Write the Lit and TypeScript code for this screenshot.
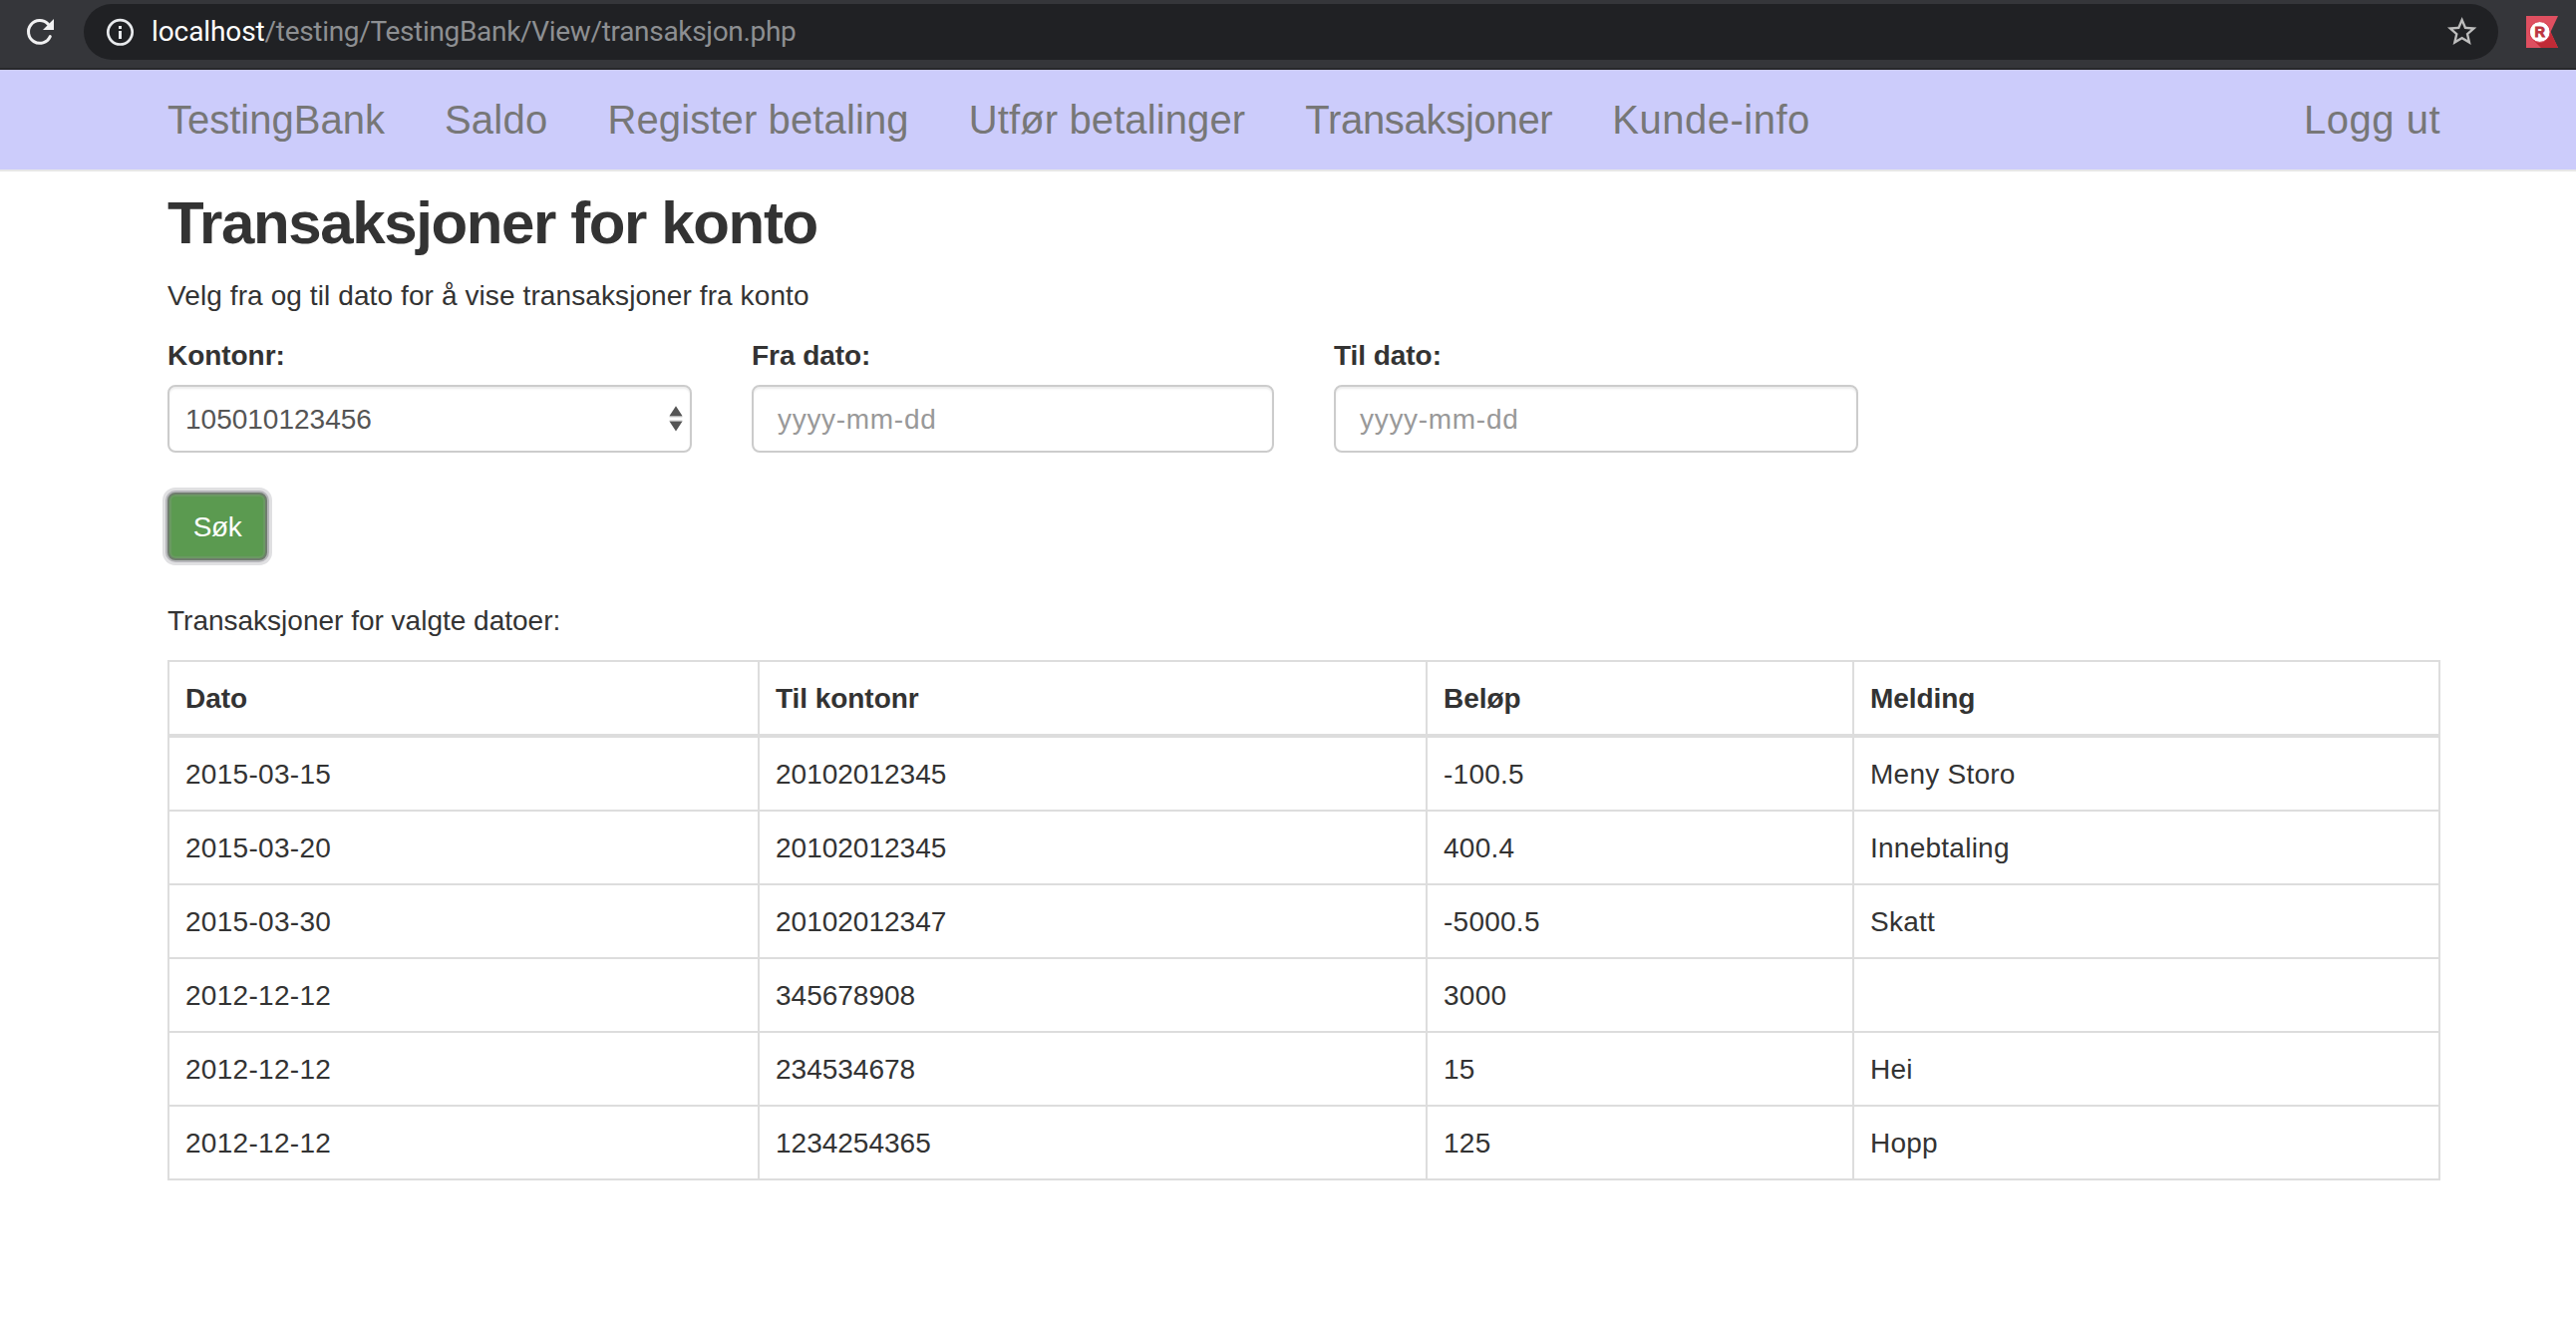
import { LitElement, html, css } from "lit";
import { customElement } from "lit/decorators.js";

interface Transaction {
  date: string;
  account: string;
  amount: string;
  message: string;
}

const TRANSACTIONS: Transaction[] = [
  { date: "2015-03-15", account: "20102012345", amount: "-100.5", message: "Meny Storo" },
  { date: "2015-03-20", account: "20102012345", amount: "400.4", message: "Innebtaling" },
  { date: "2015-03-30", account: "20102012347", amount: "-5000.5", message: "Skatt" },
  { date: "2012-12-12", account: "345678908", amount: "3000", message: "" },
  { date: "2012-12-12", account: "234534678", amount: "15", message: "Hei" },
  { date: "2012-12-12", account: "1234254365", amount: "125", message: "Hopp" },
];

@customElement("browser-bar")
export class BrowserBar extends LitElement {
  static styles = css`
    :host {
      display: flex;
      box-sizing: border-box;
      height: 70px;
      padding: 4px 0 8px;
      background: #35363a;
      border-bottom: 2px solid #28292b;
    }
    svg { display: block; flex: none; }
    .reload { width: 84px; height: 56px; }
    .pill {
      flex: 1;
      display: flex;
      align-items: center;
      height: 56px;
      border-radius: 28px;
      background: #202124;
    }
    .info { width: 68px; height: 56px; }
    .url {
      flex: 1;
      font: 28px/40px Roboto, "Liberation Sans", sans-serif;
      white-space: nowrap;
    }
    .host { color: #fff; letter-spacing: -0.1px; }
    .path { color: #8d8f92; letter-spacing: -0.32px; }
    .star { width: 35.3px; height: 35.3px; margin-right: 18.3px; }
    .ext { width: 78px; height: 56px; }
  `;

  render() {
    return html`
      <svg class="reload" viewBox="0 4 84 56">
        <path d="M50.3 36.6 A11.4 11.4 0 1 1 48.2 24.1" fill="none" stroke="#f1f1f2" stroke-width="3" stroke-linecap="round" />
        <path d="M54 19V30H43Z" fill="#f1f1f2" />
      </svg>
      <div class="pill">
        <svg class="info" viewBox="84 4 68 56">
          <circle cx="120.5" cy="32.3" r="12.2" fill="none" stroke="#e8eaed" stroke-width="2.7" />
          <path d="M119 26h3v3h-3zM119 31h3v8h-3z" fill="#e8eaed" />
        </svg>
        <div class="url"><span class="host">localhost</span><span class="path">/testing/TestingBank/View/transaksjon.php</span></div>
        <svg class="star" viewBox="0 0 24 24">
          <path fill="#bdbdbd" d="M22 9.24l-7.19-.62L12 2 9.19 8.63 2 9.24l5.46 4.73L5.82 21 12 17.27 18.18 21l-1.63-7.03L22 9.24zM12 15.4l-3.76 2.27 1-4.28-3.32-2.88 4.38-.38L12 6.1l1.71 4.04 4.38.38-3.32 2.88 1 4.28L12 15.4z" />
        </svg>
      </div>
      <svg class="ext" viewBox="2506 4 78 56">
        <path d="M2534 16H2566L2558.5 32L2566 48H2534Z" fill="#df4f60" />
        <path d="M2540.5 39.5L2549 48H2566L2558.5 32L2555 25Z" fill="#c12b36" />
        <circle cx="2547.7" cy="32" r="10.4" fill="#fff" stroke="#d63b4b" stroke-width="1" />
        <text x="2547.7" y="37.3" text-anchor="middle" font-family="Liberation Sans, sans-serif" font-weight="700" font-size="14.5" fill="#bd3540" stroke="#bd3540" stroke-width="0.9">R</text>
      </svg>
    `;
  }
}

@customElement("site-nav")
export class SiteNav extends LitElement {
  static styles = css`
    :host {
      display: flex;
      gap: 60px;
      box-sizing: border-box;
      height: 102px;
      padding: 30px 136px 30px 168px;
      background: #ccccfb;
      border-bottom: 2px solid #e7e7e7;
      color: #777;
      font: 40px/40px "Liberation Sans", Arial, sans-serif;
      white-space: nowrap;
    }
    .wide { letter-spacing: 0.12px; }
    .wider { letter-spacing: 0.25px; }
    .tight { letter-spacing: -0.3px; }
    .loose { letter-spacing: 0.5px; }
    .logout { margin-left: auto; letter-spacing: 0.5px; }
  `;

  render() {
    return html`
      <span>TestingBank</span>
      <span class="wider">Saldo</span>
      <span class="wide">Register betaling</span>
      <span class="wide">Utfør betalinger</span>
      <span class="tight">Transaksjoner</span>
      <span class="loose">Kunde-info</span>
      <span class="logout">Logg ut</span>
    `;
  }
}

@customElement("app-root")
export class AppRoot extends LitElement {
  static styles = css`
    :host {
      display: block;
      height: 1334px;
      overflow: hidden;
      background: #fff;
      color: #333;
      font: 28px/42px "Liberation Sans", Arial, sans-serif;
    }
    .page { padding: 19px 136px 0 168px; }
    h2 {
      margin: 0 0 19px;
      font-size: 60px;
      font-weight: 700;
      line-height: 66px;
      letter-spacing: -1.38px;
    }
    p { margin: 0 0 18px; }
    .lead { letter-spacing: 0.1px; }
    .filters {
      display: grid;
      grid-template-columns: 526px 524px 526px;
      column-gap: 60px;
      margin-bottom: 40px;
    }
    .label { display: block; margin-bottom: 8px; font-weight: 700; letter-spacing: -0.05px; }
    .field {
      display: flex;
      align-items: center;
      box-sizing: border-box;
      height: 68px;
      padding: 2px 24px 0;
      border: 2px solid #ccc;
      border-radius: 8px;
      box-shadow: inset 0 2px 2px rgba(0, 0, 0, 0.075);
      color: #999;
      letter-spacing: 0.7px;
    }
    .select {
      justify-content: space-between;
      padding: 2px 7px 0 16px;
      color: #555;
      letter-spacing: 0;
    }
    .arrows { display: block; width: 14px; height: 28px; margin-bottom: 2px; }
    .search {
      display: block;
      box-sizing: border-box;
      width: 100px;
      height: 68px;
      margin: 0 0 40px;
      padding: 2px 0 0;
      border: 2px solid #6f7d6d;
      border-radius: 8px;
      background: #5b9a50;
      box-shadow: inset 0 0 1px 2px #6b9a63, 0 0 0 2px #b5b5b9, 0 0 0 5px #e0e0e2;
      color: #fff;
      font: inherit;
      letter-spacing: -0.4px;
    }
    table {
      width: 2280px;
      table-layout: fixed;
      border-collapse: collapse;
      border-spacing: 0;
    }
    .c-date { width: 592px; }
    .c-account { width: 670px; }
    .c-amount { width: 428px; }
    .c-message { width: 588px; }
    th, td {
      height: 42px;
      padding: 16px 16px 14px;
      border: 2px solid #ddd;
      text-align: left;
      vertical-align: top;
    }
    th { border-bottom-width: 4px; letter-spacing: -0.05px; }
    .date { letter-spacing: 0.3px; }
    .amount { letter-spacing: 0.25px; }
    .message { letter-spacing: 0.25px; }
  `;

  render() {
    return html`
      <browser-bar></browser-bar>
      <site-nav></site-nav>
      <main class="page">
        <h2>Transaksjoner for konto</h2>
        <p class="lead">Velg fra og til dato for å vise transaksjoner fra konto</p>
        <div class="filters">
          <div>
            <span class="label">Kontonr:</span>
            <div class="field select">
              <span>105010123456</span>
              <svg class="arrows" viewBox="0 0 14 28">
                <path d="M7 1.2L13.4 11H0.6ZM0.6 16.8H13.4L7 26.6Z" fill="#555" />
                <path d="M0.6 11.2H13.4V12.2H0.6ZM0.6 15.8H13.4V16.8H0.6Z" fill="#999" />
              </svg>
            </div>
          </div>
          <div>
            <span class="label">Fra dato:</span>
            <div class="field">yyyy-mm-dd</div>
          </div>
          <div>
            <span class="label">Til dato:</span>
            <div class="field">yyyy-mm-dd</div>
          </div>
        </div>
        <button class="search">Søk</button>
        <p>Transaksjoner for valgte datoer:</p>
        <table>
          <colgroup>
            <col class="c-date" /><col class="c-account" /><col class="c-amount" /><col class="c-message" />
          </colgroup>
          <thead>
            <tr><th>Dato</th><th>Til kontonr</th><th>Beløp</th><th>Melding</th></tr>
          </thead>
          <tbody>
            ${TRANSACTIONS.map(
              (t) => html`<tr>
                <td class="date">${t.date}</td>
                <td>${t.account}</td>
                <td class="amount">${t.amount}</td>
                <td class="message">${t.message}</td>
              </tr>`
            )}
          </tbody>
        </table>
      </main>
    `;
  }
}
